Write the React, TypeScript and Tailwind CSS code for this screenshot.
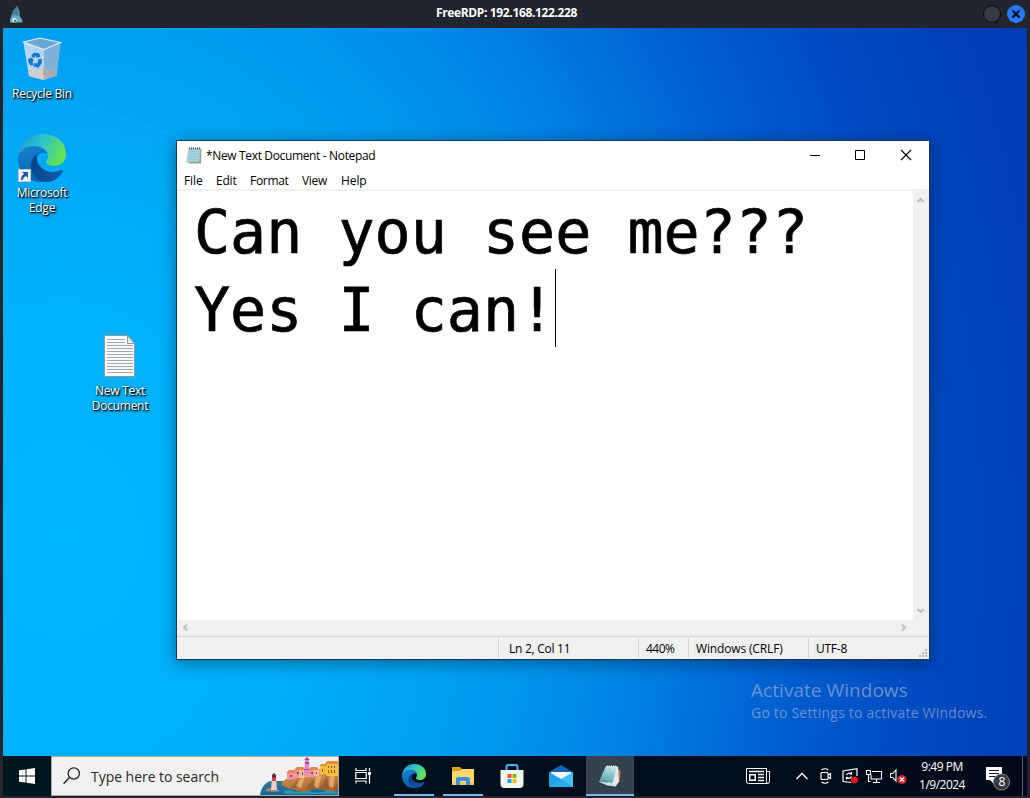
import React from "react";

const ui = "font-['Open_Sans','Noto_Sans',sans-serif]";

function EdgeLogo({ size, id }: { size: number; id: string }) {
  return (
    <svg width={size} height={size} viewBox="0 0 48 48" className="block">
      <defs>
        <linearGradient id={id + "a"} x1="0" y1="0.3" x2="1" y2="0.6">
          <stop offset="0" stopColor="#1e9bdc" />
          <stop offset="0.45" stopColor="#2fc3c9" />
          <stop offset="1" stopColor="#68e64b" />
        </linearGradient>
        <linearGradient id={id + "b"} x1="0" y1="0" x2="0.3" y2="1">
          <stop offset="0" stopColor="#1583cf" />
          <stop offset="1" stopColor="#0b62b5" />
        </linearGradient>
        <linearGradient id={id + "c"} x1="0" y1="0" x2="1" y2="0.4">
          <stop offset="0" stopColor="#0a3f86" />
          <stop offset="1" stopColor="#1257a8" />
        </linearGradient>
      </defs>
      <path d="M0 23C1 9 11 0 25 0c14 0 23 9 23 20 0 8-6 12-12 12-5 0-8-2-8-4 0-1 2-2 2-6 0-5-5-10-13-10C9 12 2 17 0 23z" fill={`url(#${id}a)`} />
      <path d="M0 24c1-7 8-12 16-12 7 0 12 4 13 8-3-2-8-1-10 3-4 8 1 18 12 22-3 2-6 3-9 3C9 47 0 37 0 24z" fill={`url(#${id}b)`} />
      <path d="M19 20c-4 3-6 7-6 12 0 8 7 16 17 16 7-1 12-5 15-11 0-1-1-1-2-1-2 1-5 2-8 2-9 0-15-6-16-12-.3-2 0-4 0-6z" fill={`url(#${id}c)`} />
    </svg>
  );
}

function RecycleBin() {
  return (
    <svg width="40" height="44" viewBox="0 0 40 44" className="block">
      <path d="M1.500 5 22 12l16.500-7-4 33.500-13 4.500-14.500-4z" fill="#a5cde9" />
      <path d="M22 13 38.500 5l-4 33.500-13 4.500z" fill="#7fb2d8" />
      <path d="M1.500 5 22 13l-.5 30L7 39z" fill="#b5d5ec" />
      <path d="M1.500 5 18 1l20.500 4.500L22 12.500z" fill="#6aa6d0" stroke="#e3f1fa" strokeWidth="1.100" />
      <path d="m6.500 34 15-3 13.500 3-.7 4.500-13 4.500L7 39z" fill="#d4cccb" opacity=".8" />
      <path d="m21.500 31 13.500 3-.7 4.500-13 4.500z" fill="#a39da4" opacity=".7" />
      <g fill="#0f78cf">
        <path d="m9 19 3-3.500 5 .8 1.500 3.200-3.500 1.500-1.500-2.500-1.500 2.500z" />
        <path d="m6 22 4-1.500 1.500 3-1 1.500 1 3.500-3.500-.5-2-4z" />
        <path d="m12 26 3.500.5V25l3 3.500-3.500 3V30l-3.500-.5z" />
        <path d="m16.500 22.500 3-1 .5 4.500-2 2.500-2.500-3z" />
      </g>
    </svg>
  );
}

function TextFile() {
  return (
    <svg width="32" height="42" viewBox="0 0 32 42" className="block">
      <path d="M.5.5h23l7 8v33H.5z" fill="#f8f9fa" stroke="#8f9aa0" />
      <path d="M23.500.5v8h7z" fill="#e6e9eb" stroke="#8f9aa0" />
      <path d="M3 4.500h18M3 7.500h18M3 10.500h26M3 13.500h26M3 16.500h26M3 19.500h26M3 22.500h26M3 25.500h26M3 28.500h26M3 31.500h26M3 34.500h26M3 37.500h26" stroke="#a4a7a9" />
    </svg>
  );
}

function NotepadSmall() {
  return (
    <svg width="16" height="17" viewBox="0 0 16 17" className="block">
      <path d="M14 2h1.500L15 16.500H3V15h10z" fill="#a69a83" />
      <path d="M3 1.500h11.500L13 15H.7z" fill="#a9d6e1" stroke="#8fb5c0" strokeWidth=".6" />
      <path d="M3 4.500h10M2.700 7h10M2.300 9.500h10M2 12h10" stroke="#86c0d0" strokeWidth=".8" />
      <path d="M3 1.500h12" stroke="#435d67" strokeWidth="2" strokeDasharray="1 1" />
    </svg>
  );
}

function NotepadTaskIcon() {
  return (
    <svg width="24" height="22" viewBox="0 0 24 22" className="block">
      <defs>
        <linearGradient id="npg" x1="0.6" y1="0" x2="0.3" y2="1">
          <stop offset="0" stopColor="#c5e4e6" />
          <stop offset="1" stopColor="#4e9eaa" />
        </linearGradient>
      </defs>
      <path d="m19 3 3.500 3-1 11-3.500 3z" fill="#a98350" />
      <path d="M18 1.500h2l1 15-3.500 5L8 20z" fill="#e3e9e9" />
      <path d="M8 1h11l-4.500 17L1 16.500z" fill="url(#npg)" />
      <path d="m0 16.500 14.500 1.500 3 3.500L8 20z" fill="#cedbdd" />
      <path d="M9 1h10" stroke="#e6f4f4" strokeDasharray="1 1" />
    </svg>
  );
}

function DesktopIcon({ className, lines, children }: { className: string; lines: string[]; children: React.ReactNode }) {
  return (
    <div className={`absolute flex w-[76px] flex-col items-center ${className}`}>
      {children}
      <div className={`${ui} text-center text-[12px] leading-[15px] tracking-[-0.25px] text-white [text-shadow:1px_1px_1px_#000,1px_1px_3px_#000]`}>
        {lines.map((l) => (
          <div key={l} className="whitespace-nowrap">{l}</div>
        ))}
      </div>
    </div>
  );
}

function TitleBar() {
  return (
    <header className="flex h-7 shrink-0 items-center bg-[#23252e]">
      <div className="flex w-[60px] pl-[10px]">
        <svg width="13" height="17" viewBox="0 0 13 17">
          <path d="M7.500 0C4 3 1.500 6 1.500 10 0 12 0 15 0 16.500h12.500C12.500 13 11 12 9.500 10V5Q8 3 7.500 0z" fill="#62aac1" />
          <path d="M7.500 0C4 3 1.500 6 1.500 10l4-1 3 1V5Q7.500 3 7.500 0z" fill="#3f7f97" />
          <circle cx="4.500" cy="14.300" r="2.200" fill="#e8f4f8" />
          <circle cx="5" cy="14.800" r="1" fill="#1d3540" />
        </svg>
      </div>
      <div className={`${ui} flex-1 pb-[2px] pl-[7px] text-center text-[12px] font-bold tracking-[-0.36px] text-white`}>FreeRDP: 192.168.122.228</div>
      <div className="flex w-[84px] justify-end gap-[6px] pr-[5px] pb-px">
        <svg width="18" height="18" viewBox="0 0 18 18"><circle cx="9" cy="9" r="8.500" fill="#363a45" stroke="#07080b" /></svg>
        <svg width="18" height="18" viewBox="0 0 18 18">
          <circle cx="9" cy="9" r="9" fill="#2777ff" />
          <path d="m5.500 5.500 7 7m0-7-7 7" stroke="#0c1220" strokeWidth="2.200" />
        </svg>
      </div>
    </header>
  );
}

function ScrollArrow({ d }: { d: string }) {
  return (
    <svg width="16" height="16" viewBox="0 0 16 16" className="block">
      <path d={d} fill="none" stroke="#bdbdbd" strokeWidth="2" />
    </svg>
  );
}

function Notepad() {
  return (
    <section className={`${ui} absolute left-[173px] top-[112px] flex h-[520px] w-[754px] flex-col border border-[#12395f] bg-white text-[12px] text-black shadow-[0_3px_14px_1px_rgba(0,0,0,.36)]`}>
      <div className="flex h-[29px] shrink-0 items-center">
        <div className="ml-[9px]"><NotepadSmall /></div>
        <div className="ml-[4px] whitespace-pre pt-px tracking-[-0.35px]">*New Text Document - Notepad</div>
        <div className="ml-auto flex">
          <svg width="46" height="29" viewBox="0 0 46 29"><path d="M19 14.500h10" stroke="#000" /></svg>
          <svg width="46" height="29" viewBox="0 0 46 29"><path d="M18.500 9.500h9v9h-9z" fill="none" stroke="#000" /></svg>
          <svg width="46" height="29" viewBox="0 0 46 29"><path d="m18 9 10 10m0-10L18 19" stroke="#000" strokeWidth="1.100" /></svg>
        </div>
      </div>
      <nav className="flex h-[19px] shrink-0 items-center pl-[7px] pt-[2px] leading-[17px]">
        <span className="w-[32px] tracking-[-0.1px]">File</span>
        <span className="w-[34px] tracking-[-0.2px]">Edit</span>
        <span className="w-[52px] tracking-[-0.3px]">Format</span>
        <span className="w-[39px] tracking-[-0.3px]">View</span>
        <span className="tracking-[-0.1px]">Help</span>
      </nav>
      <div className="h-[2px] shrink-0 bg-[#f0f0f0]" />
      <div className="flex h-[429px] shrink-0">
        <div className="flex-1 bg-[#fffeff] pl-[17px] font-['DejaVu_Sans_Mono',monospace] text-[60px] leading-[78px] text-black [-webkit-text-stroke:0.7px_#000]">
          <div className="h-[78px] whitespace-pre pt-[2px]">Can you see me???</div>
          <div className="flex h-[78px] whitespace-pre">
            <span className="pt-[2px]">Yes I can!</span>
            <span className="h-[78px] w-px bg-black" />
          </div>
        </div>
        <div className="flex w-4 flex-col justify-between bg-[#f0f0f0]">
          <ScrollArrow d="m4.500 11 3-3 3 3" />
          <ScrollArrow d="m4.500 5 3 3 3-3" />
        </div>
      </div>
      <div className="flex h-4 shrink-0 justify-between bg-[#f0f0f0] pr-[17px]">
        <ScrollArrow d="m10 4.500-3 3 3 3" />
        <ScrollArrow d="m6 4.500 3 3-3 3" />
      </div>
      <div className="flex flex-1 items-center border-t border-[#d7d7d7] bg-[#f1f0f0] leading-[22px]">
        <div className="w-[321px]" />
        <div className="h-5 w-[140px] border-l border-[#d2d2d2] pl-[10px] tracking-[-0.27px]">Ln 2, Col 11</div>
        <div className="h-5 w-[50px] border-l border-[#d2d2d2] pl-[7px] tracking-[-0.5px]">440%</div>
        <div className="h-5 w-[120px] border-l border-[#d2d2d2] pl-[7px] tracking-[-0.15px]">Windows (CRLF)</div>
        <div className="h-5 flex-1 border-l border-[#d2d2d2] pl-[7px] tracking-[-0.25px]">UTF-8</div>
        <svg width="10" height="20" viewBox="0 0 10 20">
          <path d="M6 11h2v2H6zM3 14h2v2H3zM6 14h2v2H6zM0 17h2v2H0zM3 17h2v2H3zM6 17h2v2H6z" fill="#bababa" />
        </svg>
      </div>
    </section>
  );
}

function SearchArt() {
  return (
    <svg width="78" height="38" viewBox="0 0 78 38" className="block">
      <defs>
        <linearGradient id="sea" x1="0" y1="0" x2="0" y2="1">
          <stop offset="0" stopColor="#3c7590" />
          <stop offset="1" stopColor="#0b6a9c" />
        </linearGradient>
        <linearGradient id="rock" x1="0" y1="0" x2="0.3" y2="1">
          <stop offset="0" stopColor="#dc9a58" />
          <stop offset="1" stopColor="#a96a35" />
        </linearGradient>
      </defs>
      <path d="M0 38c1-7 5-13 11-14h20l47 6v8z" fill="url(#sea)" />
      <path d="M21 27q3-5 8-6l12-3 10 1 10-3 17-2v19q-7 3-14 0-9-3-16 1-8 3-15-2-7 0-12-5z" fill="url(#rock)" />
      <path d="m30 31 9-9-2 9zM44 33l10-12 2 11zM60 31l7-12 2 14zM73 33l5-9v9z" fill="#8f5630" opacity=".65" />
      <path d="M40 22l5-2-4 11-5-2zM56 20l6-2-4 13-4-2zM70 18l5-1-2 14-4-2z" fill="#efb474" opacity=".75" />
      <path d="M27 16h8v6l-8 1zM35 13h6v8h-6zM41 13h8v7h-8zM49 13h9v7h-9zM58 12h6v6h-6z" fill="#f1939a" />
      <path d="M39 13h5v8h-5zM54 12h5v7h-5z" fill="#f8bd9c" />
      <path d="M60 9h7v8h-7zM66 7h12v12H66z" fill="#f7c233" />
      <path d="m26 16 3-3h6v3zM34 13l3-3h6l2 3zM48 13l3-3h6l2 3zM59 9l2-2h6v2zM65 7l2-3h11v3z" fill="#e88643" />
      <path d="M45 3h4l1 14h-6z" fill="#e98ac5" />
      <path d="m44 3 3-3 3 3zM45 5h4v2h-4zM44 12h5v1h-5z" fill="#9c4c93" />
      <path d="M30 18h2v2h-2zM37 15h2v2h-2zM42 15h1v3h-1zM51 15h2v2h-2zM56 15h1v2h-1zM62 12h1v3h-1zM68 9h1v2h-1zM71 9h1v2h-1zM74 9h1v2h-1zM68 13h1v3h-1zM71 13h1v3h-1zM74 13h1v3h-1z" fill="#86465a" />
      <path d="M5 34c3-4 8-4 13-1l3 1-7 1z" fill="#ab7f78" />
      <path d="M12 21h4l1 12h-6z" fill="#efcfcb" />
      <path d="M12 18l2-2 2 2v4h-4z" fill="#752735" />
      <path d="M12 21h4v3h-4z" fill="#dc4147" />
      <path d="M24 34q6-2 13 1 7 0 12-1 10 3 17 0 7 0 12 1v2H28q-5 0-4-3z" fill="#35a1b6" opacity=".8" />
    </svg>
  );
}

function TaskItem({ children, running, active }: { children: React.ReactNode; running?: boolean; active?: boolean }) {
  return (
    <div className={`flex h-10 w-12 flex-col items-center ${active ? "bg-[#35414d]" : ""}`}>
      <div className="flex h-[38px] w-full items-center justify-center pt-[2px]">{children}</div>
      <div className={`h-[2px] ${active ? "w-12 bg-[#76b9ed]" : running ? "w-10 bg-[#76b9ed]" : "w-10"}`} />
    </div>
  );
}

function Taskbar() {
  return (
    <footer className={`${ui} flex h-10 shrink-0 bg-gradient-to-r from-[#00161f] to-[#020919] text-white`}>
      <div className="flex w-12 items-center justify-center">
        <svg width="16" height="16" viewBox="0 0 16 16"><path d="m0 2.300 6.500-.9v6.100H0zM7.500 1.200 16 0v7.500H7.500zM0 8.500h6.500v6.100L0 13.700zM7.500 8.500H16V16l-8.500-1.200z" fill="#fff" /></svg>
      </div>
      <div className="flex h-10 w-72 items-center border border-[#aaa9a9] bg-[#f2f1f1] text-[#292929]">
        <svg className="ml-[11px] mt-[-1px]" width="18" height="18" viewBox="0 0 18 18"><circle cx="10.800" cy="6.500" r="5.600" fill="none" stroke="#222" strokeWidth="1.300" /><path d="M6.500 10.500.6 16.800" stroke="#222" strokeWidth="1.400" /></svg>
        <span className="ml-[10px] whitespace-nowrap text-[14px] tracking-[-0.04px]">Type here to search</span>
        <div className="ml-auto"><SearchArt /></div>
      </div>
      <div className="flex w-12 items-center justify-center">
        <svg width="17" height="16" viewBox="0 0 17 16"><path d="M1 0v2.500h10V0M1 15.500V13h10v2.500M.8 4.500h10.500v6H.8zM14.500 0v3M14.500 7v8.500" fill="none" stroke="#fff" strokeWidth="1.200" /><path d="M13 4h3v3h-3z" fill="#fff" /></svg>
      </div>
      <div className="ml-[3px] flex gap-px">
        <TaskItem running><EdgeLogo size={24} id="te" /></TaskItem>
        <TaskItem running>
          <svg width="22" height="18" viewBox="0 0 22 18"><path d="M0 0h8l2 2h11v4H0z" fill="#dba11d" /><path d="M0 4h8l2-2h12v16H0z" fill="#ffd86b" /><path d="M4 18v-7l2-1h10l2 1v7h-4v-4H8v4z" fill="#3992dd" /><path d="M0 15h4v3H0zM18 15h4v3h-4zM8 15h6v3H8z" fill="#f7c957" /></svg>
        </TaskItem>
        <TaskItem>
          <svg width="24" height="24" viewBox="0 0 24 24"><path d="M6.500 7V3q0-2 2-2h7q2 0 2 2v4" fill="none" stroke="#42b8ed" strokeWidth="2" /><path d="M.5 6h23v14q0 4-4 4h-15q-4 0-4-4z" fill="#f4f3f3" /><path d="M7.500 10h4v4h-4z" fill="#f35325" /><path d="M12.500 10h4v4h-4z" fill="#81bc06" /><path d="M7.500 15h4v4h-4z" fill="#05a6f0" /><path d="M12.500 15h4v4h-4z" fill="#ffba08" /></svg>
        </TaskItem>
        <TaskItem>
          <svg width="24" height="22" viewBox="0 0 24 22"><path d="M0 7 12 0l12 7v3H0z" fill="#1761a8" /><path d="M2 7h20v10H2z" fill="#f4f7fa" /><path d="M0 7v15h24L12 14z" fill="#209fe7" /><path d="M24 7v15H0l12-8z" fill="#42c1f5" /><path d="M0 22 12 14l12 8z" fill="#2ea9ea" /></svg>
        </TaskItem>
        <TaskItem active><NotepadTaskIcon /></TaskItem>
      </div>
      <div className="ml-auto flex items-center">
        <svg width="24" height="17" viewBox="0 0 24 17"><path d="M20.500 3.500h3v10q0 2-2 2h-19q-2 0-2-2V.5h20v13q0 2 1.500 2" fill="none" stroke="#fff" /><path d="M3.750 6.750h5.500v5.500h-5.500z" fill="none" stroke="#fff" strokeWidth="1.500" /><path d="M3 3.500h15M12 6.500h6M12 9.500h6M12 12.500h6" stroke="#fff" strokeWidth="1.300" /></svg>
        <svg className="ml-[26px]" width="12" height="8" viewBox="0 0 12 8"><path d="m.5 7 5.500-5.500L11.500 7" fill="none" stroke="#fff" strokeWidth="1.300" /></svg>
        <svg className="ml-3" width="12" height="16" viewBox="0 0 12 16"><path d="M1.500 4.500H7q1 0 1 1v5q0 1-1 1H2q-1 0-1-1v-5zM8 7l2.500-1.500v5L8 9M1.500 2Q5-.5 8.500 2M1.500 14Q5 16.500 8.500 14" fill="none" stroke="#fff" strokeWidth="1.200" /></svg>
        <svg className="ml-[10px]" width="17" height="16" viewBox="0 0 17 16"><path d="M15 8V.7L1 3v10.500l8 1M4.500 7q1.500-3 5-1V4m0 2H7.500M9.500 8.500q-1.500 3-5 1v2m0-2H6.500" fill="none" stroke="#fff" strokeWidth="1.200" /><circle cx="12.500" cy="12" r="3.500" fill="#e81123" /></svg>
        <svg className="ml-[7px]" width="17" height="15" viewBox="0 0 17 15"><path d="M6 2.500h9.500v7.500H5V5.500M10.500 10v3.500M7 13.500h7M.5 1.500h4v4h-4zM2.500 5.500v7h2" fill="none" stroke="#fff" strokeWidth="1.100" /></svg>
        <svg className="ml-[7px]" width="17" height="16" viewBox="0 0 17 16"><path d="M.5 5.500h2.300L6 2v11L2.800 9.500H.5z" fill="none" stroke="#fff" strokeWidth="1.100" /><circle cx="12" cy="11.500" r="4.500" fill="#d8222d" /><path d="m10 9.500 4 4m0-4-4 4" stroke="#fff" strokeWidth="1.200" /></svg>
        <div className="ml-[7px] w-[56px] text-center text-[12px] leading-[18px] tracking-[-0.5px]">
          <div className="whitespace-nowrap">9:49 PM</div>
          <div className="whitespace-nowrap">1/9/2024</div>
        </div>
        <div className="relative ml-[16px] mt-[6px] h-[26px] w-[36px]">
          <svg className="block" width="26" height="26" viewBox="0 0 26 26">
            <path d="M0 1h16v13H8v4l-4-4H0z" fill="#fff" />
            <path d="M3 4.500h10M3 7.500h10M3 10.500h6" stroke="#101821" strokeWidth="1.100" />
            <circle cx="15.500" cy="16" r="8" fill="#333940" stroke="#858a90" />
          </svg>
          <span className="absolute left-[8px] top-[8px] w-4 text-center text-[12px] leading-4">8</span>
        </div>
        <div className="h-10 w-px bg-[#59616e]" />
        <div className="w-1" />
      </div>
    </footer>
  );
}

export default function App() {
  return (
    <div className="flex h-[798px] w-[1030px] flex-col overflow-hidden bg-[#23252e]">
      <TitleBar />
      <div className="mx-[3px] flex h-[768px] flex-col">
        <main className="relative h-[728px] shrink-0 overflow-hidden bg-[radial-gradient(ellipse_1060px_1350px_at_60px_510px,#00b5ff_0%,#00aef9_22%,#009ff0_38%,#008ce8_50%,#0074dc_60%,#005cd0_70%,#004cc4_80%,#003fb8_92%,#003ab2_100%)]">
          <svg className="absolute inset-0" width="1024" height="728">
            <path d="M0 53 173 112v70L0 125z" fill="#fff" opacity=".01" />
            <path d="m0 53 200 64" stroke="#7bd1ff" opacity=".14" />
          </svg>
          <DesktopIcon className="left-[1px] top-[9px]" lines={["Recycle Bin"]}>
            <div className="mb-[5px]"><RecycleBin /></div>
          </DesktopIcon>
          <DesktopIcon className="left-[1px] top-[106px]" lines={["Microsoft", "Edge"]}>
            <div className="relative mb-[3px]">
              <EdgeLogo size={48} id="de" />
              <svg className="absolute bottom-0 left-0" width="13" height="13" viewBox="0 0 13 13"><path d="M.5.5h12v12H.5z" fill="#f6f6f6" stroke="#c7c7c7" /><path d="M4 3h6v6L8 7Q5 8 5 11H3q-.5-4 3-6z" fill="#22579c" /></svg>
            </div>
          </DesktopIcon>
          <DesktopIcon className="left-[79px] top-[307px]" lines={["New Text", "Document"]}>
            <div className="mb-[6px]"><TextFile /></div>
          </DesktopIcon>
          <Notepad />
          <div className={`${ui} absolute left-[748px] top-[650px] whitespace-nowrap text-[#b4bcc8]/60`}>
            <div className="text-[19px] leading-6 tracking-[0.05px]">Activate Windows</div>
            <div className="text-[14px] leading-[21px] tracking-[0.2px]">Go to Settings to activate Windows.</div>
          </div>
        </main>
        <Taskbar />
      </div>
    </div>
  );
}
